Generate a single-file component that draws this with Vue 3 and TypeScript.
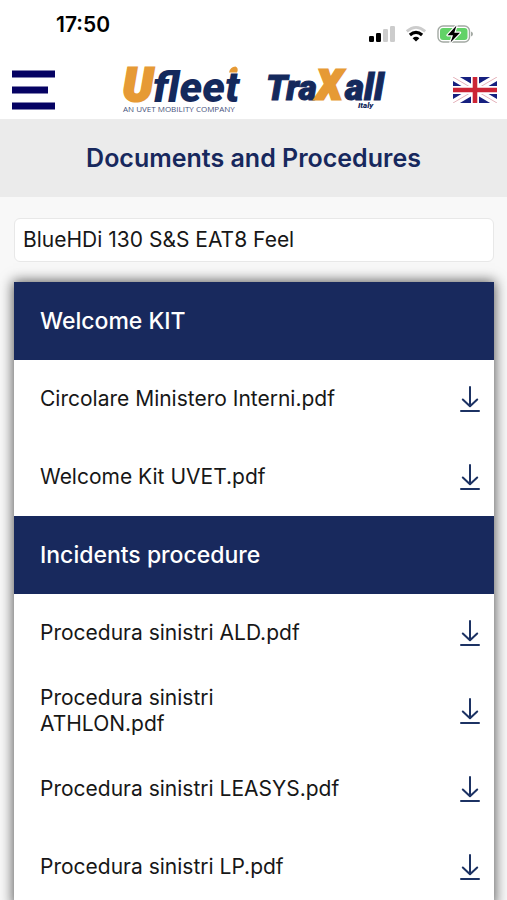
<script setup lang="ts">
import { ref } from 'vue'

interface Section {
  title: string
  files: string[]
}

const vehicles: string[] = ['BlueHDi 130 S&S EAT8 Feel']
const vehicle = ref<string>(vehicles[0])

const sections: Section[] = [
  {
    title: 'Welcome KIT',
    files: ['Circolare Ministero Interni.pdf', 'Welcome Kit UVET.pdf'],
  },
  {
    title: 'Incidents procedure',
    files: [
      'Procedura sinistri ALD.pdf',
      'Procedura sinistri ATHLON.pdf',
      'Procedura sinistri LEASYS.pdf',
      'Procedura sinistri LP.pdf',
    ],
  },
]
</script>

<template>
  <div class="page">
    <div class="status">
      <time class="clock">17:50</time>
      <div class="indicators">
        <svg width="26" height="18" viewBox="0 0 26 18" aria-hidden="true">
          <rect x="0" y="11" width="5" height="6" rx="1.2" fill="#000" />
          <rect x="7" y="8" width="5" height="9" rx="1.2" fill="#000" />
          <rect x="14" y="4" width="5" height="13" rx="1.2" fill="#ccc" />
          <rect x="21" y="1" width="5" height="16" rx="1.2" fill="#ccc" />
        </svg>
        <svg width="22" height="18" viewBox="0 0 22 18" fill="none" aria-hidden="true">
          <path d="M1.8 6.4Q11 -1.6 20.2 6.4" stroke="#ccc" stroke-width="2.8" />
          <path d="M4.9 10Q11 4.6 17.1 10" stroke="#000" stroke-width="3.2" />
          <path d="M7.6 13.2Q11 10.4 14.4 13.2L11 16.6Z" fill="#000" />
        </svg>
        <svg width="36" height="20" viewBox="0 0 36 20" aria-hidden="true">
          <rect x="1" y="2" width="31.5" height="16" rx="5" fill="#fff" stroke="#a3a9a3" stroke-width="1.4" />
          <rect x="3" y="4" width="27.5" height="12" rx="3" fill="#62d267" />
          <path d="M34 7.5Q36 8.2 36 10Q36 11.8 34 12.5Z" fill="#a3a9a3" />
          <path d="M19.5 1.5L10.5 11.2H16L13.5 18.5L23 8.7H17.3Z" fill="#000" stroke="#fff" stroke-width="2.4" stroke-linejoin="round" paint-order="stroke" />
        </svg>
      </div>
    </div>

    <header class="topbar">
      <button class="menu" type="button" aria-label="Menu">
        <svg width="44" height="40" viewBox="0 0 44 40" fill="#060263" aria-hidden="true">
          <rect x="0" y="0.5" width="43" height="7" />
          <rect x="0" y="16.5" width="36" height="7" />
          <rect x="0" y="32.5" width="43" height="7" />
        </svg>
      </button>
      <div class="logos">
        <svg class="logo" width="120" height="50" viewBox="0 0 120 50" role="img" aria-label="Ufleet">
          <text class="brand orange" x="0" y="36" font-size="46">U</text>
          <text class="brand outlined" x="30" y="37" font-size="43">fleet</text>
          <path d="M106 7.5Q107 2 112.5 1.5Q116 3 114 7.5Z" fill="#e69a35" />
          <text class="tagline" x="0" y="47" font-size="8">AN UVET MOBILITY COMPANY</text>
        </svg>
        <svg class="logo" width="120" height="50" viewBox="0 0 120 50" role="img" aria-label="Traxall Italy">
          <text class="brand navy" x="-1" y="35" font-size="35">Tra</text>
          <text class="brand navy" x="78" y="35" font-size="37">all</text>
          <text class="brand orange" x="50" y="34" font-size="40">X</text>
          <text class="brand small" x="91" y="43" font-size="8">Italy</text>
        </svg>
      </div>
      <button class="language" type="button" aria-label="English">
        <svg width="44" height="26" viewBox="0 0 44 26" aria-hidden="true">
          <rect width="44" height="26" fill="#16207f" />
          <path d="M0 0L44 26M44 0L0 26" stroke="#fff" stroke-width="7" />
          <path d="M0 0L18 10.6M44 0L26 10.6M0 26L18 15.4M44 26L26 15.4" stroke="#e5b3bb" stroke-width="1" />
          <path d="M22 0V26M0 13H44" stroke="#fff" stroke-width="8" />
          <path d="M22 0V26M0 13H44" stroke="#cb2434" stroke-width="4.6" />
        </svg>
      </button>
    </header>

    <h1 class="title">Documents and Procedures</h1>

    <main class="content">
      <select v-model="vehicle" class="vehicle" aria-label="Vehicle">
        <option v-for="v in vehicles" :key="v" :value="v">{{ v }}</option>
      </select>

      <div class="card">
        <section v-for="section in sections" :key="section.title">
          <h2 class="section-title">{{ section.title }}</h2>
          <ul class="files">
            <li v-for="file in section.files" :key="file" class="file">
              <span class="name">{{ file }}</span>
              <a class="download" href="#" :aria-label="`Download ${file}`">
                <svg width="20" height="28" viewBox="0 0 20 28" fill="none" stroke="#1c3263" stroke-width="2" stroke-linecap="round" aria-hidden="true">
                  <path d="M10 2V21" />
                  <path d="M2.8 14.5L10 21.3L17.2 14.5" stroke-linejoin="round" />
                  <path d="M1 26H19" />
                </svg>
              </a>
            </li>
          </ul>
        </section>
      </div>
    </main>
  </div>
</template>

<style>
body {
  margin: 0;
  background: #f8f8f8;
}
</style>

<style scoped>
.page {
  min-height: 100vh;
  overflow: hidden;
  background: #f8f8f8;
  color: #171717;
  font-family: Inter, "Liberation Sans", sans-serif;
  font-size: 21px;
  line-height: 26px;
}

.status {
  display: flex;
  justify-content: space-between;
  align-items: flex-start;
  height: 48px;
  box-sizing: border-box;
  padding: 13px 34px 0 56px;
  background: #fff;
}

.clock {
  color: #000;
  font-weight: 600;
  line-height: 24px;
}

.indicators {
  display: flex;
  align-items: center;
  gap: 10px;
  padding-top: 11px;
}

.topbar {
  display: flex;
  justify-content: space-between;
  align-items: center;
  height: 72px;
  box-sizing: border-box;
  padding: 12px 10px 0 12px;
  border-bottom: 1px solid #ececec;
  background: #fff;
}

.menu,
.language {
  display: flex;
  padding: 0;
  border: 0;
  background: none;
}

.logos {
  display: flex;
  gap: 24px;
}

.logo {
  overflow: visible;
}

.brand {
  font-family: Roboto, "Open Sans", sans-serif;
  font-style: italic;
  font-weight: 900;
}

.navy {
  fill: #14295c;
  stroke: #14295c;
  stroke-width: 1px;
}

.small {
  fill: #14295c;
}

.orange {
  fill: #e69a35;
  stroke: #e69a35;
  stroke-width: 3px;
}

.outlined {
  fill: #14295c;
  stroke: #fff;
  stroke-width: 2px;
  paint-order: stroke;
}

.tagline {
  fill: #47527c;
  font-family: "Open Sans", sans-serif;
  font-weight: 500;
}

.title {
  margin: 0;
  padding: 25px 16px 26px;
  background: #ebebeb;
  color: #17285d;
  font-size: 25px;
  font-weight: 600;
  text-align: center;
}

.content {
  padding: 21px 13px 0 14px;
}

.vehicle {
  display: block;
  width: 100%;
  height: 44px;
  padding: 0 8px;
  appearance: none;
  border: 1px solid #e8e8e8;
  border-radius: 6px;
  background: #fff;
  color: #171717;
  font: inherit;
}

.card {
  margin-top: 20px;
  background: #fff;
  box-shadow: 0 0 12px 1px rgba(0, 0, 0, 0.65);
}

.section-title {
  margin: 0;
  padding: 26px;
  background: #18295d;
  color: #fff;
  font-size: 23px;
  font-weight: 500;
}

.files {
  margin: 0;
  padding: 0;
  list-style: none;
}

.file {
  display: flex;
  justify-content: space-between;
  align-items: center;
  min-height: 78px;
  padding: 0 14px 0 26px;
}

.name {
  width: 69%;
}

.download {
  display: flex;
}
</style>
